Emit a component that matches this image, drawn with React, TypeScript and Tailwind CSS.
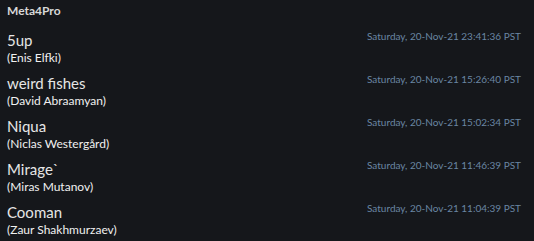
import React from 'react'

type Track = { title: string; artist: string; date: string }

const tracks: Track[] = [
  { title: '5up', artist: '(Enis Elfki)', date: 'Saturday, 20-Nov-21 23:41:36 PST' },
  { title: 'weird fishes', artist: '(David Abraamyan)', date: 'Saturday, 20-Nov-21 15:26:40 PST' },
  { title: 'Niqua', artist: '(Niclas Westergård)', date: 'Saturday, 20-Nov-21 15:02:34 PST' },
  { title: 'Mirage`', artist: '(Miras Mutanov)', date: 'Saturday, 20-Nov-21 11:46:39 PST' },
  { title: 'Cooman', artist: '(Zaur Shakhmurzaev)', date: 'Saturday, 20-Nov-21 11:04:39 PST' },
]

const App: React.FC = () => {
  return (
    <div
      className="w-[534px] h-[241px] overflow-hidden bg-[#15171b] px-[7px] pt-[4px]"
      style={{ fontFamily: 'Lato, "Open Sans", sans-serif' }}
    >
      <h1 className="text-[12px] font-bold text-[#d8d8d8] leading-[14px]">Meta4Pro</h1>
      <ul className="mt-[12px]">
        {tracks.map((t) => (
          <li key={t.title} className="flex justify-between h-[43px]">
            <div className="flex flex-col">
              <span className="text-[15px] leading-[20px] text-[#e6e6e6]">{t.title}</span>
              <span className="text-[12px] leading-[16px] text-[#f0f0f0]">{t.artist}</span>
            </div>
            <span className="text-[10px] leading-[12px] text-[#6a86a3] pr-[6px]">{t.date}</span>
          </li>
        ))}
      </ul>
    </div>
  )
}

export default App
